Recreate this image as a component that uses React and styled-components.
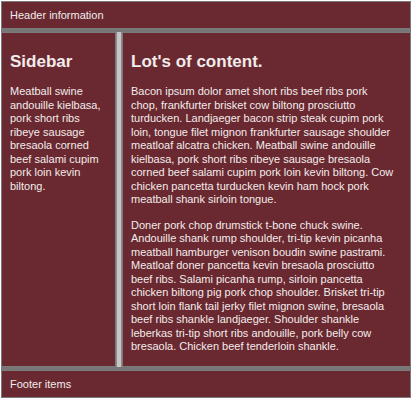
import React from "react";
import styled, { createGlobalStyle } from "styled-components";

const Global = createGlobalStyle`
  html, body { margin: 0; padding: 0; background: #ffffff; }
  body { font-family: "Liberation Sans", Arial, sans-serif; }
`;

const Page = styled.div`
  margin: 1px;
  width: 410px;
  height: 397px;
  box-sizing: border-box;
  display: grid;
  grid-template-columns: 115px 6px 1fr;
  grid-template-rows: auto 1fr auto;
  grid-template-areas:
    "header header header"
    "side split main"
    "footer footer footer";
  row-gap: 3px;
  background: #777777;
  color: #f2ecec;
  font-size: 11px;
  line-height: 13px;
`;

const Bar = styled.div`
  grid-area: ${(p) => p.$area};
  background: #6a2830;
  border: 1px solid #7b7b7b;
  padding: 7px 8px 6px;
`;

const Panel = styled.div`
  grid-area: ${(p) => p.$area};
  background: #6a2830;
  border: 1px solid #7b7b7b;
  padding: ${(p) => (p.$wide ? "8px 14px 8px 8px" : "8px")};
  line-height: 13.5px;
  overflow: hidden;
`;

const Splitter = styled.div`
  grid-area: split;
  background: #c6c6c6;
  border-left: 1px solid #8a8a8a;
  border-right: 1px solid #8a8a8a;
`;

const Heading = styled.h2`
  margin: 11px 0 13px;
  font-size: 17px;
  line-height: 20px;
  font-weight: bold;
`;

const Para = styled.p`
  margin: 0 0 12px;
  &:last-child { margin-bottom: 0; }
`;

export default function App() {
  return (
    <>
      <Global />
      <Page>
        <Bar $area="header">Header information</Bar>
        <Panel $area="side">
          <Heading>Sidebar</Heading>
          <Para>
            Meatball swine andouille kielbasa, pork short ribs ribeye sausage
            bresaola corned beef salami cupim pork loin kevin biltong.
          </Para>
        </Panel>
        <Splitter />
        <Panel $area="main" $wide>
          <Heading>Lot's of content.</Heading>
          <Para>
            Bacon ipsum dolor amet short ribs beef ribs pork chop, frankfurter
            brisket cow biltong prosciutto turducken. Landjaeger bacon strip
            steak cupim pork loin, tongue filet mignon frankfurter sausage
            shoulder meatloaf alcatra chicken. Meatball swine andouille
            kielbasa, pork short ribs ribeye sausage bresaola corned beef salami
            cupim pork loin kevin biltong. Cow chicken pancetta turducken kevin
            ham hock pork meatball shank sirloin tongue.
          </Para>
          <Para>
            Doner pork chop drumstick t-bone chuck swine. Andouille shank rump
            shoulder, tri-tip kevin picanha meatball hamburger venison boudin
            swine pastrami. Meatloaf doner pancetta kevin bresaola prosciutto
            beef ribs. Salami picanha rump, sirloin pancetta chicken biltong pig
            pork chop shoulder. Brisket tri-tip short loin flank tail jerky
            filet mignon swine, bresaola beef ribs shankle landjaeger. Shoulder
            shankle leberkas tri-tip short ribs andouille, pork belly cow
            bresaola. Chicken beef tenderloin shankle.
          </Para>
        </Panel>
        <Bar $area="footer">Footer items</Bar>
      </Page>
    </>
  );
}
